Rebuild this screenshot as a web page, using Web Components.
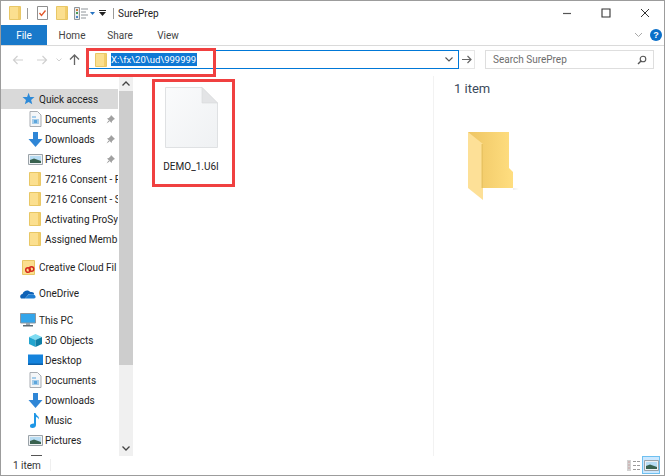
<!DOCTYPE html>
<html>
<head>
<meta charset="utf-8">
<title>SurePrep</title>
<style>
  html, body { margin: 0; padding: 0; background: #fff; }
  body { font-family: Roboto, "Open Sans", sans-serif; font-size: 10px; color: #1e1e1e; }
</style>
</head>
<body>
<explorer-window>
  <title-bar slot="title"></title-bar>
  <ribbon-tabs slot="tabs"></ribbon-tabs>
  <address-bar slot="address"></address-bar>
  <nav-pane slot="nav"></nav-pane>
  <file-view slot="files"></file-view>
  <details-pane slot="details"></details-pane>
  <status-bar slot="status"></status-bar>
  <red-callout slot="overlay" style="left:85px;top:47px;width:124px;height:23px"></red-callout>
  <red-callout slot="overlay" style="left:151px;top:78px;width:77px;height:102px"></red-callout>
</explorer-window>

<script>
const icons = {
  folder: `<svg width="12" height="14" viewBox="0 0 12 14"><path d="M.5.500h11v13H.5z" fill="#fbdf8f" stroke="#e8c766"/><path d="M9 1h2v12H9z" fill="#f2cd6b"/></svg>`,
  star: `<svg width="14" height="14" viewBox="0 0 14 14"><path d="M7.600.8l1.500 4.100 4.400.2-3.400 2.800 1.200 4.400L7.600 10l-3.800 2.300L5 7.900 1.500 5.100l4.600-.2z" fill="#2d8ad8"/></svg>`,
  doc: `<svg width="13" height="16" viewBox="0 0 13 16"><path d="M1 .5h7.500l3.500 3.500v11.500H1z" fill="#f4f6f8" stroke="#a9adb2"/><path d="M3 5h4v2H3zM3 8h7v5H3z" fill="#a6cdea"/><path d="M5 9h3v3H5z" fill="#5da6dc"/></svg>`,
  download: `<svg width="15" height="15" viewBox="0 0 15 15"><path d="M5 0h5v7h4.500l-7 8-7-8H5z" fill="#2f86d6"/></svg>`,
  pictures: `<svg width="15" height="13" viewBox="0 0 15 13"><path d="M.5 1.500h14v10H.5z" fill="#eef1f3" stroke="#9aa2a8"/><path d="M2 3h11v7H2z" fill="#b7dcf3"/><path d="M2 7l4-1.500 7 2.500v2H2z" fill="#39624f"/></svg>`,
  cloudFiles: `<svg width="13" height="15" viewBox="0 0 13 15"><path d="M.5.500h12v14H.5z" fill="#fbdf8f" stroke="#e8c766"/><circle cx="6" cy="10" r="2.300" fill="none" stroke="#d5281e" stroke-width="1.500"/><circle cx="9.500" cy="9" r="2.300" fill="none" stroke="#d5281e" stroke-width="1.500"/></svg>`,
  onedrive: `<svg width="16" height="11" viewBox="0 0 16 11"><path d="M1 10.500C-.5 9 0 6.500 2.500 6 3.500 2.500 8 1 10.500 4 13 3.500 14.500 5 14 6.500l-5-.5-4 4.500z" fill="#0f62b6"/><path d="M5 10.500l4-4.200c2 0 6-.3 6.500 2 .3 1.500-.5 2.200-1.500 2.200z" fill="#1f7ed2"/></svg>`,
  pc: `<svg width="16" height="14" viewBox="0 0 16 14"><path d="M.5.500h15v9.500H.5z" fill="#33a5ea" stroke="#8c97a0"/><path d="M6 10h4v2H6z" fill="#9aa6ae"/><path d="M3 12h10v1.500H3z" fill="#5d6a73"/></svg>`,
  objects: `<svg width="15" height="15" viewBox="0 0 15 15"><path d="M7.500 1L14 4l-6.500 3L1 4z" fill="#7fdcf2"/><path d="M1 4l6.500 3v7L1 11z" fill="#22a5cf"/><path d="M14 4L7.500 7v7l6.500-3z" fill="#0f7ea6"/></svg>`,
  desktop: `<svg width="15" height="12" viewBox="0 0 15 12"><path d="M0 .5h15v10.500H0z" fill="#1583dc"/><path d="M0 9.500h15V11H0z" fill="#0c5fa8"/></svg>`,
  music: `<svg width="12" height="15" viewBox="0 0 12 15"><path d="M5 0h1.500c.3 2.500 4 3 3.500 6.500-.6-1.800-1.900-2.400-3-2.600V12c0 1.800-1.500 3-3.500 3S1 14 1 12.700s1.600-2.300 4-2.200z" fill="#1f97e6"/></svg>`
};

class ExplorerWindow extends HTMLElement {
  constructor() {
    super();
    this._shadowRoot = this.attachShadow({ mode: "open" });
  }
  connectedCallback() {
    this._shadowRoot.innerHTML = `
      <style>
        :host { display: flex; flex-direction: column; position: relative; width: 665px; height: 476px; box-sizing: border-box; border: 1px solid #9c9c9c; background: #fff; overflow: hidden; }
        .main { display: flex; height: 380px; }
      </style>
      <slot name="title"></slot>
      <slot name="tabs"></slot>
      <slot name="address"></slot>
      <div class="main">
        <slot name="nav"></slot>
        <slot name="files"></slot>
        <slot name="details"></slot>
      </div>
      <slot name="status"></slot>
      <slot name="overlay"></slot>
    `;
  }
}

class TitleBar extends HTMLElement {
  constructor() {
    super();
    this._shadowRoot = this.attachShadow({ mode: "open" });
  }
  connectedCallback() {
    this._shadowRoot.innerHTML = `
      <style>
        :host { display: flex; align-items: center; height: 24px; padding-left: 8px; font-size: 10px; color: #222; }
        .sep { width: 1px; height: 11px; background: #9a9a9a; }
        .name { flex: 1; }
        .ctl { width: 39px; height: 24px; display: flex; align-items: center; justify-content: center; }
      </style>
      ${icons.folder}
      <span class="sep" style="margin:0 9px 0 6px"></span>
      <svg width="11" height="14" viewBox="0 0 11 14"><path d="M.5.500h10v13H.5z" fill="#fff" stroke="#8f8f8f"/><path d="M2.500 7l2 2.500 4-5" fill="none" stroke="#e2562a" stroke-width="1.300"/></svg>
      <span style="width:8px"></span>
      ${icons.folder}
      <span style="width:6px"></span>
      <svg width="14" height="13" viewBox="0 0 14 13"><path d="M.5.500h5v12h-5z" fill="#e9ecef" stroke="#8e9499"/><path d="M2 2h2v2H2z" fill="#d07f3e"/><path d="M2 5h2v2H2z" fill="#4a9b55"/><path d="M2 9h2v2H2z" fill="#4d88c9"/><path d="M7 2h7M7 5h5M7 8h7M7 11h5" stroke="#8e9499"/></svg>
      <svg width="5" height="3" viewBox="0 0 5 3" style="margin-left:2px"><path d="M0 0h5L2.500 3z" fill="#2673c2"/></svg>
      <svg width="7" height="6" viewBox="0 0 7 6" style="margin-left:4px"><path d="M0 0h7v1H0zM0 2h7L3.500 6z" fill="#222"/></svg>
      <span class="sep" style="margin:0 4px 0 7px"></span>
      <span class="name">SurePrep</span>
      <div class="ctl"><svg width="10" height="10" viewBox="0 0 10 10"><path d="M1 5.500h8" stroke="#555" stroke-width="1.200"/></svg></div>
      <div class="ctl"><svg width="10" height="10" viewBox="0 0 10 10"><path d="M1 1h8v8H1z" fill="none" stroke="#333" stroke-width="1.100"/></svg></div>
      <div class="ctl"><svg width="10" height="10" viewBox="0 0 10 10"><path d="M1 1l8 8M9 1l-8 8" stroke="#333" stroke-width="1"/></svg></div>
    `;
  }
}

class RibbonTabs extends HTMLElement {
  constructor() {
    super();
    this._shadowRoot = this.attachShadow({ mode: "open" });
  }
  connectedCallback() {
    this._shadowRoot.innerHTML = `
      <style>
        :host { display: flex; align-items: stretch; height: 20px; border-bottom: 1px solid #dadada; font-size: 10px; color: #444; }
        .file { width: 46px; background: #1979ca; color: #fff; display: flex; align-items: center; justify-content: center; }
        .tab { width: 48px; display: flex; align-items: center; justify-content: center; }
        .right { margin-left: auto; display: flex; align-items: center; gap: 7px; padding-right: 2px; }
        .help { width: 12px; height: 12px; border-radius: 50%; background: #0a6fc9; color: #fff; font: bold 9px/12px "Liberation Sans", sans-serif; text-align: center; }
      </style>
      <div class="file">File</div>
      <div class="tab" style="margin-left:1px">Home</div>
      <div class="tab">Share</div>
      <div class="tab">View</div>
      <div class="right">
        <svg width="9" height="6" viewBox="0 0 9 6"><path d="M1 1l3.500 3.500L8 1" fill="none" stroke="#a9a9a9"/></svg>
        <div class="help">?</div>
      </div>
    `;
  }
}

class AddressBar extends HTMLElement {
  constructor() {
    super();
    this._shadowRoot = this.attachShadow({ mode: "open" });
  }
  connectedCallback() {
    this._shadowRoot.innerHTML = `
      <style>
        :host { display: flex; align-items: center; height: 30px; box-sizing: border-box; padding: 0 10px 3px 11px; font-size: 10px; }
        .nav { width: 75px; display: flex; align-items: center; flex: none; }
        .box { width: 372px; height: 19px; box-sizing: border-box; border: 1px solid #0078d7; display: flex; align-items: center; padding-left: 7px; flex: none; }
        .sel { background: #0f78d4; color: #fff; margin-left: 4px; height: 13px; line-height: 13px; padding-right: 1px; font-size: 9.5px; }
        .drop { margin-left: auto; margin-right: 5px; }
        .go { width: 16px; height: 19px; box-sizing: border-box; border: 1px solid #e6e6e6; border-left: 0; display: flex; align-items: center; justify-content: center; flex: none; }
        .search { margin-left: 10px; width: 169px; height: 19px; box-sizing: border-box; border: 1px solid #dedede; display: flex; align-items: center; padding: 0 6px 0 7px; color: #6d6d6d; flex: none; }
        .search svg { margin-left: auto; }
      </style>
      <div class="nav">
        <svg width="12" height="10" viewBox="0 0 12 10"><path d="M11 5H1.500M5.500 1l-4 4 4 4" fill="none" stroke="#d0d0d0" stroke-width="1.200"/></svg>
        <svg width="12" height="10" viewBox="0 0 12 10" style="margin-left:12px"><path d="M1 5h9.500M6.500 1l4 4-4 4" fill="none" stroke="#d0d0d0" stroke-width="1.200"/></svg>
        <svg width="6" height="4" viewBox="0 0 6 4" style="margin-left:8px"><path d="M.5.500l2.500 2.500L5.500.5" fill="none" stroke="#d0d0d0"/></svg>
        <svg width="11" height="11" viewBox="0 0 11 11" style="margin-left:7px"><path d="M5.500 11V1.500M1 5.500l4.500-4.500 4.500 4.500" fill="none" stroke="#666" stroke-width="1.300"/></svg>
      </div>
      <div class="box">
        ${icons.folder}
        <span class="sel">X:\\fx\\20\\ud\\999999</span>
        <svg class="drop" width="8" height="5" viewBox="0 0 8 5"><path d="M.5.500L4 4 7.500.5" fill="none" stroke="#555" stroke-width="1.100"/></svg>
      </div>
      <div class="go"><svg width="10" height="9" viewBox="0 0 10 9"><path d="M0 4.500h8.500M5.500 1l3.500 3.500L5.500 8" fill="none" stroke="#666" stroke-width="1.200"/></svg></div>
      <div class="search">Search SurePrep
        <svg width="10" height="10" viewBox="0 0 10 10"><circle cx="6" cy="4" r="2.800" fill="none" stroke="#555" stroke-width="1.100"/><path d="M4 6L1 9" stroke="#555" stroke-width="1.500"/></svg>
      </div>
    `;
  }
}

class NavItem extends HTMLElement {
  constructor() {
    super();
    this._shadowRoot = this.attachShadow({ mode: "open" });
  }
  connectedCallback() {
    const pin = this.hasAttribute("pinned") ? `<svg class="pin" width="9" height="9" viewBox="0 0 9 9"><path d="M5 0l4 4-1.200.4L6 6.200 5.600 8 1 3.400 2.800 3l1.800-1.800zM2.500 5.500L.5 8.500l3-2z" fill="#a0a0a0"/></svg>` : "";
    this._shadowRoot.innerHTML = `
      <style>
        :host { display: flex; align-items: center; height: 20px; flex: none; white-space: nowrap; overflow: hidden; position: relative; }
        :host([active]) { background: #d9d9d9; }
        .ico { width: 20px; display: flex; justify-content: center; align-items: center; flex: none; margin-left: ${this.getAttribute("indent")}px; margin-right: ${this.getAttribute("gap")}px; }
        .pin { position: absolute; left: 105px; top: 6px; }
      </style>
      <span class="ico"><slot name="icon"></slot></span>
      <span><slot></slot></span>
      ${pin}
    `;
  }
}

class NavPane extends HTMLElement {
  constructor() {
    super();
    this._shadowRoot = this.attachShadow({ mode: "open" });
  }
  item(label, icon, level, attrs = "") {
    const indent = level === 1 ? 24 : 17;
    const gap = level === 1 ? 0 : 1;
    return `<nav-item indent="${indent}" gap="${gap}" ${attrs}><span slot="icon" style="display:flex">${icons[icon]}</span>${label}</nav-item>`;
  }
  connectedCallback() {
    this._shadowRoot.innerHTML = `
      <style>
        :host { display: flex; width: 132px; flex: none; }
        .list { width: 117px; padding-top: 13px; overflow: hidden; flex: none; position: relative; display: flex; flex-direction: column; }
        .scroll { width: 14px; margin-left: 1px; background: #f0f0f0; display: flex; flex-direction: column; align-items: center; flex: none; }
        .thumb { width: 14px; height: 274px; background: #cdcdcd; margin-top: 5px; }
        .up { margin-top: 5px; }
        .down { margin-top: auto; margin-bottom: 5px; }
        .tip { position: absolute; left: 30px; bottom: 0; width: 11px; height: 1px; background: #555; }
      </style>
      <div class="list">
        ${this.item("Quick access", "star", 0, "active")}
        ${this.item("Documents", "doc", 1, "pinned")}
        ${this.item("Downloads", "download", 1, "pinned")}
        ${this.item("Pictures", "pictures", 1, "pinned")}
        ${this.item("7216 Consent - F", "folder", 1)}
        ${this.item("7216 Consent - S", "folder", 1)}
        ${this.item("Activating ProSy", "folder", 1)}
        ${this.item("Assigned Memb", "folder", 1)}
        <div style="height:8px;flex:none"></div>
        ${this.item("Creative Cloud Fil", "cloudFiles", 0)}
        <div style="height:6px;flex:none"></div>
        ${this.item("OneDrive", "onedrive", 0)}
        <div style="height:7px;flex:none"></div>
        ${this.item("This PC", "pc", 0)}
        ${this.item("3D Objects", "objects", 1)}
        ${this.item("Desktop", "desktop", 1)}
        ${this.item("Documents", "doc", 1)}
        ${this.item("Downloads", "download", 1)}
        ${this.item("Music", "music", 1)}
        ${this.item("Pictures", "pictures", 1)}
        <div class="tip"></div>
      </div>
      <div class="scroll">
        <svg class="up" width="8" height="5" viewBox="0 0 8 5"><path d="M.5 4.500L4 1l3.500 3.500" fill="none" stroke="#444" stroke-width="1.300"/></svg>
        <div class="thumb"></div>
        <svg class="down" width="8" height="5" viewBox="0 0 8 5"><path d="M.5.500L4 4l3.500-3.500" fill="none" stroke="#444" stroke-width="1.300"/></svg>
      </div>
    `;
  }
}

class FileView extends HTMLElement {
  constructor() {
    super();
    this._shadowRoot = this.attachShadow({ mode: "open" });
  }
  connectedCallback() {
    this._shadowRoot.innerHTML = `
      <style>
        :host { display: block; flex: 1; padding: 11px 0 0 32px; }
        .tile { display: flex; flex-direction: column; align-items: center; gap: 13px; width: 52px; font-size: 10px; color: #222; white-space: nowrap; }
      </style>
      <div class="tile">
        <svg width="53" height="61" viewBox="0 0 53 61"><defs><linearGradient id="p" x1="0" y1="0" x2="1" y2="1"><stop offset="0" stop-color="#fafbfc"/><stop offset="1" stop-color="#eff1f3"/></linearGradient></defs><path d="M.5.500H37L52.500 16v44.500H.5z" fill="url(#p)" stroke="#dfe1e3"/><path d="M37 .5V16h15.500z" fill="#e3e4e6" stroke="#d6d8da" stroke-width=".6"/></svg>
        <span>DEMO_1.U6I</span>
      </div>
    `;
  }
}

class DetailsPane extends HTMLElement {
  constructor() {
    super();
    this._shadowRoot = this.attachShadow({ mode: "open" });
  }
  connectedCallback() {
    this._shadowRoot.innerHTML = `
      <style>
        :host { display: block; width: 231px; flex: none; box-sizing: border-box; border-left: 1px solid #f2f2f2; padding: 3px 0 0 20px; }
        .count { font-size: 13px; line-height: 20px; color: #3c4a5c; }
        svg { display: block; margin: 32px 0 0 13px; }
      </style>
      <div class="count">1 item</div>
      <svg width="52" height="70" viewBox="0 0 52 70"><defs><linearGradient id="b" x1="0" y1="0" x2="1" y2="0"><stop offset="0" stop-color="#eec563"/><stop offset="1" stop-color="#ffde80"/></linearGradient></defs><path d="M46 57l6 1-6 1z" fill="#eee"/><path d="M1 1h41v36l4 4v16H15z" fill="url(#b)"/><path d="M1 1l15 12v56L1 57z" fill="#fde097"/><path d="M16 13v44h-1.500V13z" fill="#e9c362"/></svg>
    `;
  }
}

class StatusBar extends HTMLElement {
  constructor() {
    super();
    this._shadowRoot = this.attachShadow({ mode: "open" });
  }
  connectedCallback() {
    this._shadowRoot.innerHTML = `
      <style>
        :host { display: flex; align-items: center; height: 18px; padding-left: 12px; font-size: 10px; color: #333; }
        .sep { width: 1px; height: 12px; background: #efefef; margin-left: 9px; }
        .views { margin-left: auto; display: flex; align-items: center; gap: 2px; margin-right: 4px; }
        .on { width: 18px; height: 18px; box-sizing: border-box; border: 1px solid #6ec0f0; background: #cce8ff; display: flex; align-items: center; justify-content: center; }
      </style>
      <span>1 item</span><span class="sep"></span>
      <div class="views">
        <svg width="13" height="11" viewBox="0 0 13 11"><path d="M0 0h4v11H0z" fill="#d3d3d3"/><path d="M1 2h2M1 5h2M1 8h2" stroke="#c9a0a0"/><path d="M6 1.500h3M10 1.500h3M6 5.500h3M10 5.500h3M6 9.500h3M10 9.500h3" stroke="#9a9a9a"/></svg>
        <div class="on">${icons.pictures}</div>
      </div>
    `;
  }
}

class RedCallout extends HTMLElement {
  constructor() {
    super();
    this._shadowRoot = this.attachShadow({ mode: "open" });
  }
  connectedCallback() {
    this._shadowRoot.innerHTML = `<style>:host { display: block; position: absolute; border: 3px solid #f04040; pointer-events: none; }</style>`;
  }
}

customElements.define("nav-item", NavItem);
customElements.define("explorer-window", ExplorerWindow);
customElements.define("title-bar", TitleBar);
customElements.define("ribbon-tabs", RibbonTabs);
customElements.define("address-bar", AddressBar);
customElements.define("nav-pane", NavPane);
customElements.define("file-view", FileView);
customElements.define("details-pane", DetailsPane);
customElements.define("status-bar", StatusBar);
customElements.define("red-callout", RedCallout);
</script>
</body>
</html>
